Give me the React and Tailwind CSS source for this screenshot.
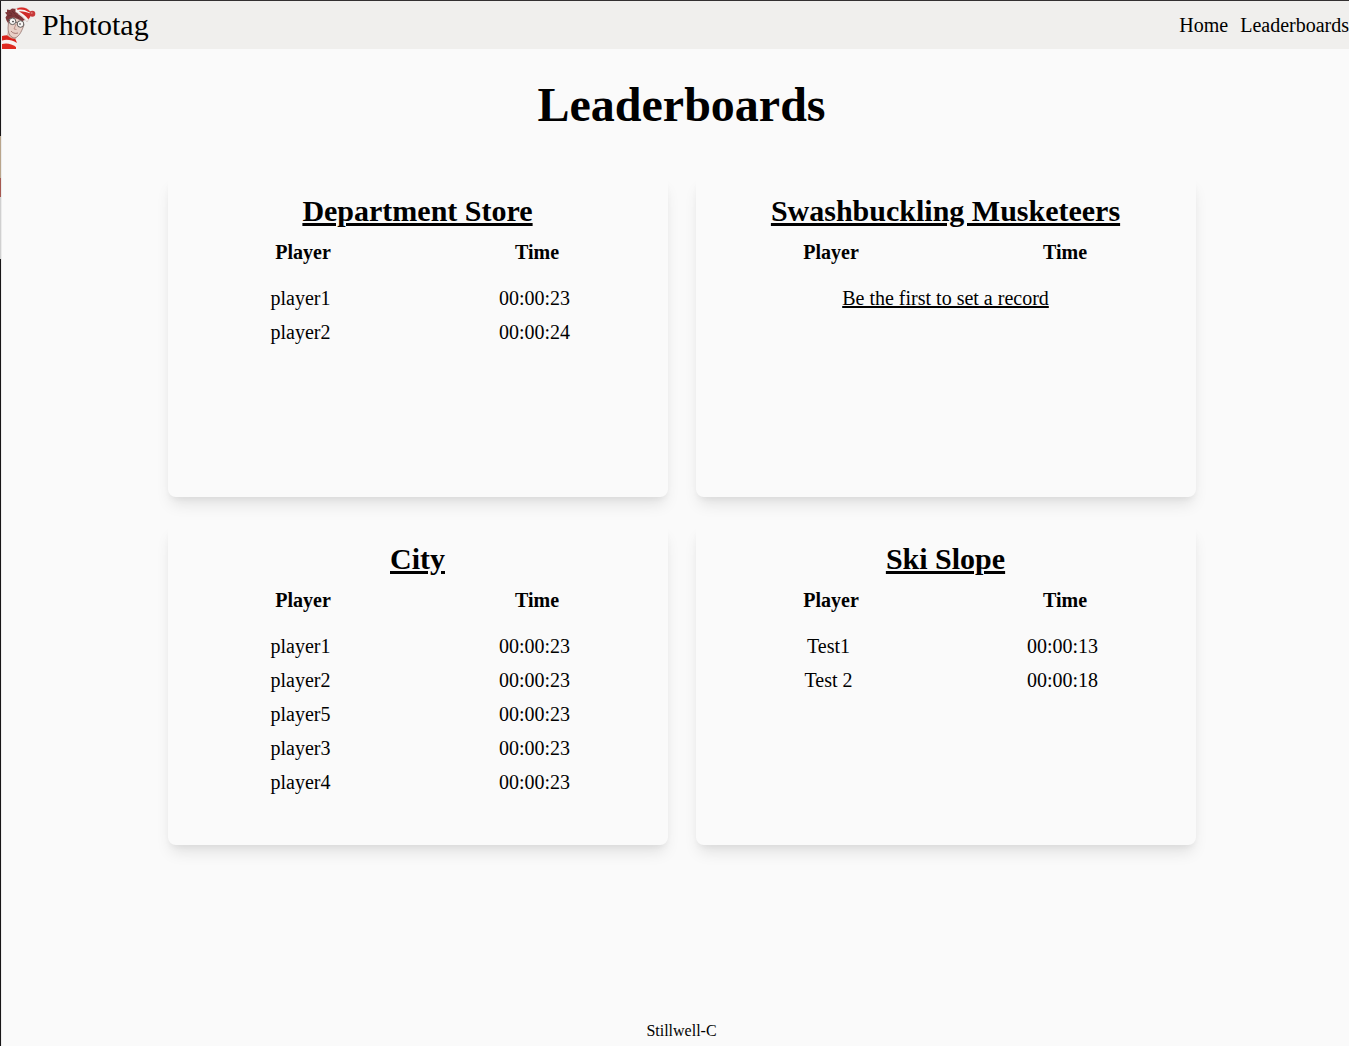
const boards = [
  {
    name: "Department Store",
    records: [
      ["player1", "00:00:23"],
      ["player2", "00:00:24"],
    ],
  },
  { name: "Swashbuckling Musketeers", records: [] },
  {
    name: "City",
    records: [
      ["player1", "00:00:23"],
      ["player2", "00:00:23"],
      ["player5", "00:00:23"],
      ["player3", "00:00:23"],
      ["player4", "00:00:23"],
    ],
  },
  {
    name: "Ski Slope",
    records: [
      ["Test1", "00:00:13"],
      ["Test 2", "00:00:18"],
    ],
  },
];

function Logo() {
  return (
    <svg viewBox="0 0 34 42" className="h-[42px] w-[34px]" aria-hidden="true">
      {/* striped shirt */}
      <path d="M0 29C5 27.5 11 29 14 32L16 42H0Z" fill="#f8f2f0" />
      <path d="M0 29C5 27.5 11 28.5 13 31L15 36C10 33 5 32 0 33.5Z" fill="#d8231b" />
      <path d="M0 37C5 35.5 10 37 14 40L14 42H0Z" fill="#df2a20" />
      {/* neck and face */}
      <path d="M6 23L5 28C8 31 11 32 14 32L15 28Z" fill="#dcb9ad" />
      <path d="M7 9L20 13L22 18C20 23 18 29 13 31C9 31 6 27 6 21Z" fill="#e9d0c7" stroke="#85645e" strokeWidth=".7" />
      {/* hair */}
      <path d="M6 16L4.5 13.5L3.5 10.5L5 8L3 5.5L5 5L5 2.5L8 3L10 1.5L15 2L16 7L20 10L23 13L20 14L16 12L12 10.5L9 11L7 13L6 17Z" fill="#7d3638" />
      <path d="M7 5L10 7M10 4L13 7M6 9L10 8M13 8L17 11" stroke="#5a2728" strokeWidth=".6" fill="none" />
      {/* knitted hat */}
      <path d="M13.5 2C17-.5 25 0 29 5L28 10L25 15C22 10.5 18 7 13.5 5Z" fill="#f8f3f1" stroke="#b99792" strokeWidth=".4" />
      <path d="M15 1.4C20-.4 25 .5 28.5 5L26.5 5C23 2.8 19 2 15.5 3Z" fill="#d92a26" />
      <path d="M17 4.4C21 4.2 25 5.2 28.7 6.8L28 10.3L26.3 12.3C23.5 8.6 20.5 6.2 17 4.4Z" fill="#d02b29" />
      <circle cx="30.3" cy="6.8" r="3" fill="#c8393a" />
      <circle cx="29.7" cy="6" r="1" fill="#dc7774" />
      {/* glasses and features */}
      <g fill="#f8f6f4" stroke="#56504f" strokeWidth=".9">
        <circle cx="10.5" cy="14.3" r="3.3" />
        <circle cx="18.5" cy="17" r="3.3" />
        <path d="M13.8 15L15.3 15.7M7.3 13.3L5.5 12.5" fill="none" />
      </g>
      <circle cx="11" cy="14.6" r=".8" fill="#27242a" />
      <circle cx="18" cy="17" r=".8" fill="#27242a" />
      <path d="M14 17L12 22L14.5 22.5" fill="none" stroke="#a9786e" strokeWidth=".7" />
      <path d="M9 24C10.5 26 13 27 16 26" fill="none" stroke="#8d5550" strokeWidth=".7" />
    </svg>
  );
}

function Board({ name, records }) {
  return (
    <section className="flex h-80 flex-col rounded-lg px-4 pt-4 shadow-[0_10px_15px_-3px_rgba(0,0,0,0.1),0_4px_6px_-2px_rgba(0,0,0,0.05)]">
      <h2 className="text-center text-[30px] leading-9 font-bold underline">{name}</h2>
      <table className="w-full table-fixed text-center text-xl leading-[30px]" aria-label={name}>
        <thead>
          <tr>
            <th className="pt-2 pb-3 pl-[5px] font-bold">Player</th>
            <th className="pt-2 pb-3 pl-[5px] font-bold">Time</th>
          </tr>
        </thead>
        <tbody>
          {records.map(([player, time]) => (
            <tr key={player}>
              <td className="pt-1">{player}</td>
              <td className="pt-1">{time}</td>
            </tr>
          ))}
          {records.length === 0 && (
            <tr>
              <td colSpan={2} className="pt-1">
                <a href="#play" className="underline">Be the first to set a record</a>
              </td>
            </tr>
          )}
        </tbody>
      </table>
    </section>
  );
}

export default function App() {
  return (
    <div className="flex min-h-screen border-t border-[#333031] bg-[#fafafa] font-['Liberation_Serif',serif] text-black">
      <div className="flex w-px shrink-0 flex-col bg-[#181617]" aria-hidden="true">
        <div className="mt-[135px] h-[42px] bg-[#b9a58b]" />
        <div className="h-[19px] bg-[#a65850]" />
        <div className="h-[62px] bg-[#d0d0d0]" />
      </div>
      <div className="flex min-w-0 flex-1 flex-col border-l border-[#ececec]">
        <header className="flex h-12 items-center justify-between bg-[#f0efed]">
          <a href="#home" className="flex h-12 items-end gap-1.5">
            <Logo />
            <span className="self-center text-[30px] leading-9">Phototag</span>
          </a>
          <nav className="flex gap-3 text-xl leading-7">
            <a href="#home">Home</a>
            <a href="#leaderboards">Leaderboards</a>
          </nav>
        </header>
        <div className="flex flex-1 flex-col items-center pl-3">
          <main className="flex w-full flex-1 flex-col items-center">
            <h1 className="mt-8 text-5xl leading-12 font-bold">Leaderboards</h1>
            <div className="mt-12 grid w-full max-w-[1028px] grid-cols-2 gap-7">
              {boards.map((board) => (
                <Board key={board.name} {...board} />
              ))}
            </div>
          </main>
          <footer className="pb-[3px] text-base leading-6">Stillwell-C</footer>
        </div>
      </div>
    </div>
  );
}
